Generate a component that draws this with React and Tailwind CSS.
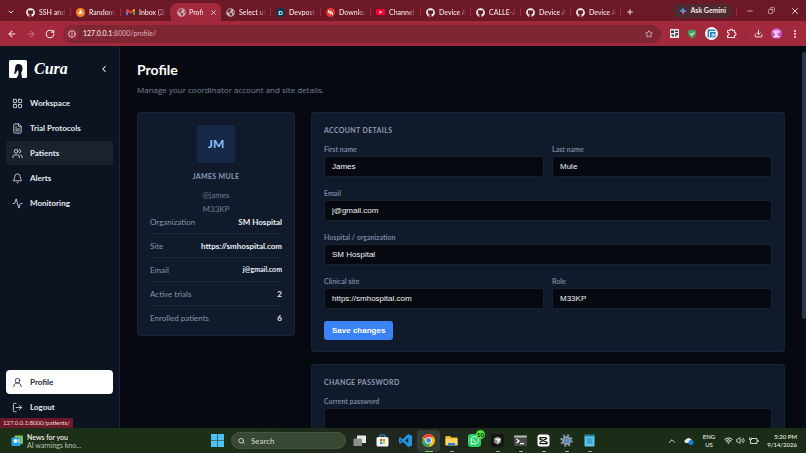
import React from 'react';
import {
  Activity,
  ArrowLeft,
  ArrowRight,
  Bell,
  ChevronDown,
  ChevronLeft,
  ChevronUp,
  Copy,
  Download,
  EllipsisVertical,
  FileText,
  Info,
  LayoutGrid,
  LogOut,
  Minus,
  Plus,
  RotateCw,
  Search,
  Star,
  UserRound,
  Users,
  Volume2,
  Wifi,
  X,
} from 'lucide-react';
import { FaGithub, FaGlobeAmericas } from 'react-icons/fa';

const Globe = () => <FaGlobeAmericas className="size-[9px] text-[#c3a9ae]" />;
const Github = () => <FaGithub className="size-[9px] text-white" />;

const Avast = () => (
  <svg viewBox="0 0 18 18" className="size-[9px]">
    <circle cx="9" cy="9" r="9" fill="#f58220" />
    <path d="M9 3 L14 13 Q9 9 4 13 Z" fill="#fff" />
  </svg>
);

const Gmail = () => (
  <svg viewBox="0 0 20 15" className="w-[9px]">
    <path d="M0 2 V15 H4.5 V6 Z" fill="#4285f4" />
    <path d="M20 2 V15 H15.5 V6 Z" fill="#34a853" />
    <path d="M0 2 Q2 -1 4.5 1 L10 5.5 L15.5 1 V6.5 L10 10.5 L4.5 6.5 L0 3.5 Z" fill="#ea4335" />
    <path d="M15.5 1 Q18 -1 20 2 V3.5 L15.5 6.5 Z" fill="#fbbc04" />
  </svg>
);

const Devpost = () => (
  <span className="flex size-[9px] items-center justify-center rounded-full bg-[#003e54] text-[6px] font-bold text-white">
    D
  </span>
);

const Downloads = () => (
  <svg viewBox="0 0 18 18" className="size-[9px]">
    <circle cx="9" cy="9" r="9" fill="#e8372c" />
    <path d="M5 4 V8 Q5 10 8 10 H10 V13 M13 14 V10 Q13 8 10 8 H8 V5" stroke="#fff" strokeWidth="2" fill="none" />
  </svg>
);

const Youtube = () => (
  <svg viewBox="0 0 18 13" className="w-[9px]">
    <rect width="18" height="13" rx="3.5" fill="#ff0033" />
    <path d="M7 3.5 L12.5 6.5 L7 9.5 Z" fill="#fff" />
  </svg>
);

const tabs = [
  { title: 'SSH and', icon: Github },
  { title: 'Random', icon: Avast },
  { title: 'Inbox (3)', icon: Gmail },
  { title: 'Profi', icon: Globe, active: true },
  { title: 'Select us', icon: Globe },
  { title: 'Devpost', icon: Devpost },
  { title: 'Downloa', icon: Downloads },
  { title: 'Channel', icon: Youtube },
  { title: 'Device A', icon: Github },
  { title: 'CALLE-A', icon: Github },
  { title: 'Device A', icon: Github },
  { title: 'Device A', icon: Github },
];

const Tab = ({ title, icon: Icon, active }) => (
  <div
    className={
      active
        ? 'flex h-[18px] w-[50px] items-center gap-[3px] rounded-t-md bg-[#a2283c] pr-1 pl-1.5'
        : 'flex h-[18px] w-[50px] items-center gap-1 pl-[5px]'
    }
  >
    <span className="flex w-[9px] shrink-0 justify-center">
      <Icon />
    </span>
    <span className="min-w-0 flex-1 mask-r-from-70% whitespace-nowrap">{title}</span>
    {active ? (
      <button aria-label="Close tab">
        <X className="size-[7px]" strokeWidth={3} />
      </button>
    ) : (
      <span className="h-2 w-px shrink-0 bg-[#a2283c]" />
    )}
  </div>
);

const Browser = () => (
  <header className="shrink-0 text-[7px] font-medium text-[#f6e6e8]">
    <div className="flex h-[21px] items-end bg-[#6c1827]">
      <button aria-label="Search tabs" className="flex h-[18px] w-[21px] items-center justify-center">
        <ChevronDown className="size-2" strokeWidth={3} />
      </button>
      {tabs.map((tab, i) => (
        <Tab key={i} {...tab} />
      ))}
      <button aria-label="New tab" className="flex h-[18px] w-[17px] items-center justify-center">
        <Plus className="size-2" strokeWidth={3} />
      </button>
      <div className="ml-auto flex h-[21px] items-center">
        <button className="flex h-[14px] items-center gap-[3px] rounded-md bg-[#4c2a2e] px-1.5 font-bold whitespace-nowrap">
          <svg viewBox="0 0 16 16" className="size-2">
            <path d="M8 0 Q9 7 16 8 Q9 9 8 16 Q7 9 0 8 Q7 7 8 0 Z" fill="#4c8df6" />
            <path d="M0 8 Q7 7 8 0 L8 8 Z" fill="#34a8c4" />
            <path d="M16 8 Q9 9 8 16 L8 8 Z" fill="#d96570" />
          </svg>
          Ask Gemini
        </button>
        <span className="ml-1 h-2 w-px bg-[#a2283c]" />
        <button aria-label="Minimize" className="flex w-[22px] justify-center pl-1">
          <Minus className="size-2" />
        </button>
        <button aria-label="Restore" className="flex w-6 justify-center">
          <Copy className="size-[7px] -scale-x-100" />
        </button>
        <button aria-label="Close" className="flex w-[23px] justify-center">
          <X className="size-2.5" />
        </button>
      </div>
    </div>

    <div className="flex h-[25px] items-center bg-[#a2283c] pr-1.5 pl-[7px]">
      <div className="flex w-[56px] items-center gap-[9px]">
        <button aria-label="Back">
          <ArrowLeft className="size-2.5" strokeWidth={2.5} />
        </button>
        <button aria-label="Forward">
          <ArrowRight className="size-2.5 text-[#c9707f]" strokeWidth={2.5} />
        </button>
        <button aria-label="Reload">
          <RotateCw className="size-2.5" strokeWidth={2.5} />
        </button>
      </div>
      <div className="flex h-[18px] flex-1 items-center rounded-full bg-[#7f2633] pr-2 pl-[2px]">
        <span className="mr-1 flex size-[14px] items-center justify-center rounded-full bg-[#92293a]">
          <Info className="size-2" strokeWidth={2.5} />
        </span>
        <span className="flex-1">
          127.0.0.1<span className="text-[#d5a9b0]">:8000/profile/</span>
        </span>
        <button aria-label="Bookmark">
          <Star className="size-2" />
        </button>
      </div>
      <div className="ml-[9px] flex items-center gap-2">
        <svg viewBox="0 0 18 18" className="size-[9px]">
          <rect width="18" height="18" fill="#e8e4e4" />
          <path d="M2 3 H8 V8 H2 Z M10 3 H16 V6 H10 Z M11 8 H16 V12 H13 V15 H10 Z M2 11 H8 V15 H5 Z" fill="#3b3f46" />
        </svg>
        <svg viewBox="0 0 18 18" className="size-[10px]">
          <path d="M9 1 L17 3 Q17 13 9 17 Q1 13 1 3 Z" fill="#43a05c" />
          <path d="M5.5 8 L8.5 11 L13 6" stroke="#c6ecd0" strokeWidth="2" fill="none" />
        </svg>
        <svg viewBox="0 0 26 26" className="size-[13px]">
          <circle cx="13" cy="13" r="13" fill="#fff" />
          <rect x="5" y="5" width="16" height="16" rx="2" fill="#1d7fb8" />
          <path d="M9 9 H21 M9 9 V21 M13 14 H18 V18 H13" stroke="#fff" strokeWidth="2" fill="none" />
        </svg>
        <svg viewBox="0 0 22 22" className="size-[11px]" fill="none" stroke="#f6e6e8" strokeWidth="2.2">
          <path d="M3 5 H8 Q8 2 10.5 2 Q13 2 13 5 H17 V9 Q20 9 20 12 Q20 15 17 15 V19 H3 V15 Q6 15 6 12 Q6 9 3 9 Z" />
        </svg>
        <span className="h-2 w-px bg-[#7f2633]" />
        <Download className="size-[9px]" strokeWidth={2.5} />
        <svg viewBox="0 0 22 22" className="size-[11px]">
          <circle cx="11" cy="11" r="11" fill="#c94fc4" />
          <path d="M2 8 Q11 -2 20 8 L11 12 Z" fill="#f2b6ea" />
          <path d="M4 17 H18 M9 8 V17 L14 12" stroke="#fde8fb" strokeWidth="2.5" fill="none" />
        </svg>
        <button aria-label="Menu">
          <EllipsisVertical className="size-[10px]" strokeWidth={3} />
        </button>
      </div>
    </div>
  </header>
);

const navItems = [
  { label: 'Workspace', icon: LayoutGrid },
  { label: 'Trial Protocols', icon: FileText },
  { label: 'Patients', icon: Users, hover: true },
  { label: 'Alerts', icon: Bell },
  { label: 'Monitoring', icon: Activity },
];

const NavLink = ({ label, icon: Icon, hover, active }) => {
  let look = 'text-[#e2e8f0]';
  if (hover) look = 'bg-[#1c222d] text-[#e2e8f0]';
  if (active) look = 'bg-white text-[#1e293b]';
  return (
    <a href="#" className={`flex h-6 items-center gap-[7px] rounded px-1.5 text-[8px] font-bold ${look}`}>
      <Icon className="size-[11px]" strokeWidth={1.8} />
      {label}
    </a>
  );
};

const Sidebar = () => (
  <aside className="flex w-[120px] shrink-0 flex-col border-r border-[#1a2436] bg-[#0d1421] px-1.5 pt-[13px] pb-[9px]">
    <div className="mb-[13px] flex h-[19px] items-center pr-1 pl-[3px]">
      <svg viewBox="0 0 36 36" className="size-[18px]">
        <rect width="36" height="36" rx="3" fill="#fff" />
        <path
          d="M12 18 Q12 8 19 8 Q27 8 27 17 Q27 22 24.5 25 L26 36 H15 Q20 31 19 25 Q19 20 16.500 21 L14 27 L10 27.500 Q12 23 12 18 Z"
          fill="#0d1421"
        />
      </svg>
      <span className="ml-[7px] font-['Liberation_Serif',serif] text-[16px] leading-[18px] font-bold text-white italic">
        Cura
      </span>
      <button aria-label="Collapse sidebar" className="ml-auto text-white">
        <ChevronLeft className="size-2.5" strokeWidth={2.5} />
      </button>
    </div>
    <nav className="flex flex-col gap-px">
      {navItems.map((item) => (
        <NavLink key={item.label} {...item} />
      ))}
    </nav>
    <div className="mt-auto flex flex-col gap-px">
      <NavLink label="Profile" icon={UserRound} active />
      <NavLink label="Logout" icon={LogOut} />
    </div>
  </aside>
);

const Card = ({ children }) => (
  <section className="rounded-[3px] border border-[#182335] bg-[#111a2a] px-3 pt-3 pb-[11px]">{children}</section>
);

const CardTitle = ({ children }) => (
  <h2 className="text-[7px] leading-[10px] font-bold tracking-wider text-[#8c9cb5] uppercase">{children}</h2>
);

const Field = ({ id, label, value = '', type = 'text' }) => (
  <div className="flex flex-1 flex-col">
    <label htmlFor={id} className="mb-0.5 text-[7px] leading-[10px] font-bold text-[#74849d]">
      {label}
    </label>
    <input
      id={id}
      type={type}
      defaultValue={value}
      className="h-[21px] w-full rounded-[3px] border border-[#172131] bg-[#060a10] px-[7px] font-['Liberation_Sans',sans-serif] text-[8px] text-[#eef2f7]"
    />
  </div>
);

const facts = [
  { name: 'Organization', value: 'SM Hospital' },
  { name: 'Site', value: 'https://smhospital.com' },
  { name: 'Email', value: 'j@gmail.com', small: true },
  { name: 'Active trials', value: '2' },
  { name: 'Enrolled patients', value: '6' },
];

const ProfileCard = () => (
  <Card>
    <div className="flex flex-col items-center">
      <div className="flex size-[38px] items-center justify-center rounded-[3px] bg-[#172846] text-[12px] font-bold text-[#8ec2fb]">
        JM
      </div>
      <div className="mt-2">
        <CardTitle>James Mule</CardTitle>
      </div>
      <p className="mt-[7px] text-[8px] leading-[14px] text-[#6f7f98]">@james</p>
      <p className="text-[8px] leading-[14px] text-[#6f7f98]">M33KP</p>
    </div>
    <dl className="text-[8px] leading-[12px]">
      {facts.map(({ name, value, small }) => (
        <div
          key={name}
          className="flex justify-between border-b border-[#1a2536] pt-1.5 pb-[5px] whitespace-nowrap first:pt-0 last:border-0 last:pb-0"
        >
          <dt className="text-[#8595ae]">{name}</dt>
          <dd
            className={
              small ? 'text-[7px] leading-[10px] font-bold text-[#e8eef6]' : 'font-bold text-[#e8eef6]'
            }
          >
            {value}
          </dd>
        </div>
      ))}
    </dl>
  </Card>
);

const Page = () => (
  <main className="min-w-0 flex-1 overflow-hidden bg-[#060a10] px-[17px] pt-4">
    <h1 className="text-[14px] leading-4 font-bold text-white">Profile</h1>
    <p className="mt-1.5 font-['Open_Sans',sans-serif] text-[8px] leading-3 text-[#74849d]">
      Manage your coordinator account and site details.
    </p>
    <div className="mt-4 grid grid-cols-[1fr_3fr] items-start gap-4">
      <ProfileCard />
      <div className="flex flex-col gap-3">
        <Card>
          <CardTitle>Account details</CardTitle>
          <form className="mt-[9px] flex flex-col gap-[11px]">
            <div className="flex gap-2">
              <Field id="first-name" label="First name" value="James" />
              <Field id="last-name" label="Last name" value="Mule" />
            </div>
            <Field id="email" label="Email" value="j@gmail.com" />
            <Field id="hospital" label="Hospital / organization" value="SM Hospital" />
            <div className="flex gap-2">
              <Field id="site" label="Clinical site" value="https://smhospital.com" />
              <Field id="role" label="Role" value="M33KP" />
            </div>
            <button
              type="button"
              className="mt-px h-[19px] self-start rounded-[3px] bg-[#3b82f6] px-2 font-['Liberation_Sans',sans-serif] text-[8px] font-bold text-white"
            >
              Save changes
            </button>
          </form>
        </Card>
        <Card>
          <CardTitle>Change password</CardTitle>
          <form className="mt-[9px] flex flex-col gap-[11px]">
            <Field id="current-password" label="Current password" type="password" />
          </form>
        </Card>
      </div>
    </div>
  </main>
);

const Windows = () => (
  <svg viewBox="0 0 24 24" className="size-[13px]">
    <path d="M0 0 H11.5 V11.5 H0 Z M12.5 0 H24 V11.5 H12.5 Z M0 12.5 H11.5 V24 H0 Z M12.5 12.5 H24 V24 H12.5 Z" fill="#4cc2f5" />
  </svg>
);

const TaskView = () => (
  <svg viewBox="0 0 26 26" className="size-[13px]">
    <rect x="8" y="3" width="18" height="15" rx="1" fill="#e9e9e9" />
    <rect x="1" y="9" width="17" height="15" rx="1" fill="#8d8d8d" />
  </svg>
);

const Store = () => (
  <svg viewBox="0 0 26 26" className="size-[13px]">
    <path d="M8 7 V2 H18 V7" stroke="#2ea3dd" strokeWidth="2" fill="none" />
    <rect x="1" y="6" width="24" height="19" rx="3" fill="#f4f4f4" />
    <path d="M8 10 H12.5 V14.5 H8 Z" fill="#f25022" />
    <path d="M13.5 10 H18 V14.5 H13.5 Z" fill="#7fba00" />
    <path d="M8 15.5 H12.5 V20 H8 Z" fill="#00a4ef" />
    <path d="M13.5 15.5 H18 V20 H13.5 Z" fill="#ffb900" />
  </svg>
);

const Vscode = () => (
  <svg viewBox="0 0 24 24" className="size-[13px]">
    <path d="M17 0 L24 3 V21 L17 24 L7 14.5 L2.5 18 L0 16.5 V7.5 L2.5 6 L7 9.5 Z M17 7 L11 12 L17 17 Z M2.5 9.5 V14.5 L5 12 Z" fill="#2196e3" fillRule="evenodd" />
  </svg>
);

const Chrome = () => (
  <svg viewBox="0 0 24 24" className="size-[13px]">
    <circle cx="12" cy="12" r="12" fill="#fbc116" />
    <path d="M12 12 L1.6 6 A12 12 0 0 1 22.4 6 H12 Z" fill="#ea4335" />
    <path d="M1.6 6 A12 12 0 0 0 12 24 L17 15 L12 12 L6.8 15 Z" fill="#34a853" />
    <circle cx="12" cy="12" r="6" fill="#fff" />
    <circle cx="12" cy="12" r="4.6" fill="#4285f4" />
  </svg>
);

const Folder = () => (
  <svg viewBox="0 0 26 26" className="size-[13px]">
    <path d="M1 4 H10 L13 7 H25 V22 H1 Z" fill="#f3b22b" />
    <path d="M1 9 H25 V23 H1 Z" fill="#fdd663" />
    <path d="M6 18 H20 V23 H6 Z" fill="#2b86d9" />
  </svg>
);

const Whatsapp = () => (
  <span className="relative">
    <svg viewBox="0 0 26 26" className="size-[13px]">
      <rect width="26" height="26" rx="6" fill="#25d366" />
      <path d="M6 20 L7 16 A7.5 7.5 0 1 1 10 19 Z" stroke="#fff" strokeWidth="2" fill="none" />
      <path d="M10 10 Q11 15 16 16" stroke="#fff" strokeWidth="2.5" fill="none" />
    </svg>
    <span className="absolute -top-1 -right-1 flex size-[9px] items-center justify-center rounded-full bg-[#4ade3c] text-[6px] font-semibold text-black">
      10
    </span>
  </span>
);

const Cursor = () => (
  <svg viewBox="0 0 26 26" className="size-[13px]">
    <rect width="26" height="26" rx="6" fill="#141414" />
    <path d="M13 5 L20 9 V17 L13 21 L6 17 V9 Z" fill="#8b8b8b" />
    <path d="M6 9 L20 9 L13 21 V13 Z" fill="#f1f1f1" />
  </svg>
);

const Terminal = () => (
  <svg viewBox="0 0 26 26" className="size-[13px]">
    <rect y="3" width="26" height="21" rx="2" fill="#4a4a4a" />
    <rect y="3" width="26" height="4" rx="2" fill="#b5b5b5" />
    <path d="M5 10 L10 14 L5 18 M12 19 H20" stroke="#fff" strokeWidth="2.5" fill="none" />
  </svg>
);

const Capcut = () => (
  <svg viewBox="0 0 26 26" className="size-[13px]">
    <rect x="1" y="1" width="24" height="24" rx="5" fill="#fff" />
    <path d="M18 9 V7 H6 V10 L20 17 V19 H6 V17 M6 16 L20 9" stroke="#111" strokeWidth="2.5" fill="none" />
  </svg>
);

const Gear = () => (
  <svg viewBox="0 0 26 26" className="size-[13px]">
    <circle cx="13" cy="13" r="10.5" fill="none" stroke="#8796a5" strokeWidth="4" strokeDasharray="4.4 3.85" />
    <circle cx="13" cy="13" r="7" fill="#5d7188" stroke="#9dacba" strokeWidth="3" />
    <circle cx="13" cy="13" r="3.5" fill="#3f9be8" />
  </svg>
);

const Notepad = () => (
  <svg viewBox="0 0 26 26" className="size-[13px]">
    <rect x="3" y="2" width="20" height="23" rx="2" fill="#5cc8ef" />
    <rect x="3" y="1" width="20" height="4" rx="1" fill="#2a7fa8" />
    <path d="M7 10 H19 M7 14 H19 M7 18 H19" stroke="#1b7ba6" strokeWidth="1.6" />
  </svg>
);

const apps = [
  { name: 'Task view', icon: TaskView },
  { name: 'Store', icon: Store },
  { name: 'VS Code', icon: Vscode },
  { name: 'Chrome', icon: Chrome, focused: true },
  { name: 'Files', icon: Folder, open: true },
  { name: 'WhatsApp', icon: Whatsapp },
  { name: 'Cursor', icon: Cursor, open: true },
  { name: 'Terminal', icon: Terminal, open: true },
  { name: 'CapCut', icon: Capcut, open: true },
  { name: 'Settings', icon: Gear, open: true },
  { name: 'Notepad', icon: Notepad, open: true },
];

const Taskbar = () => (
  <footer className="grid h-[25px] shrink-0 grid-cols-[1fr_auto_1fr] items-center bg-linear-to-r from-[#1c2f17] from-30% via-[#20261f] via-50% to-[#1b2c17] to-65% text-[7px] text-white">
    <div className="flex items-center gap-1 pl-[11px]">
      <svg viewBox="0 0 24 24" className="size-3">
        <rect x="7" y="1" width="17" height="17" rx="2" fill="#8bc34a" />
        <rect x="1" y="5" width="18" height="17" rx="2" fill="#25a3e8" />
        <circle cx="9" cy="12" r="4" fill="#e6f7ff" />
        <path d="M14 10 H18 M14 14 H18" stroke="#e6f7ff" strokeWidth="2" />
      </svg>
      <div className="leading-[8px]">
        <p className="font-medium">News for you</p>
        <p className="text-[#bcc6ba]">AI warnings kno...</p>
      </div>
    </div>

    <div className="flex items-center pl-1.5">
      <button aria-label="Start" className="mr-[7px]">
        <Windows />
      </button>
      <label className="mr-[2px] flex h-[17px] w-[115px] items-center gap-1.5 rounded-full border border-[#465541] bg-[#384933] px-1.5">
        <Search className="size-2" strokeWidth={2.5} />
        <input
          type="text"
          placeholder="Search"
          aria-label="Search"
          className="w-full min-w-0 text-[8px] placeholder:text-[#d3dbd0]"
        />
      </label>
      {apps.map(({ name, icon: Icon, open, focused }) => (
        <button
          key={name}
          aria-label={name}
          className={
            focused
              ? 'relative flex h-[22px] w-[23px] items-center justify-center rounded bg-white/10'
              : 'relative flex h-[22px] w-[23px] items-center justify-center'
          }
        >
          <Icon />
          {open && <span className="absolute bottom-0 h-px w-1 rounded-full bg-[#a8b0a6]" />}
          {focused && <span className="absolute bottom-0 h-px w-2 rounded-full bg-[#6fd35c]" />}
        </button>
      ))}
    </div>

    <div className="flex items-center justify-end pr-[9px]">
      <ChevronUp className="size-2.5" />
      <svg viewBox="0 0 20 16" className="ml-[7px] w-[10px]">
        <path d="M4 12 Q0 11 1 7 Q2 5 4 5 Q7 0 12 3 Q16 4 16 8 V12 Z" fill="#e5edf5" />
        <circle cx="14" cy="11" r="5" fill="#1683d8" />
      </svg>
      <div className="mx-[9px] text-center text-[6px] leading-[8px]">
        <p>ENG</p>
        <p>US</p>
      </div>
      <Wifi className="size-[9px]" strokeWidth={2.5} />
      <Volume2 className="ml-[3px] size-[9px]" />
      <svg viewBox="0 0 20 16" className="ml-1 w-[10px]" fill="none" stroke="#fff" strokeWidth="1.6">
        <path d="M6 3 H16 V13 H3 V7 M18.5 6 V10 M1 1 V5 H5 V1 M3 5 V8" />
      </svg>
      <div className="ml-2 text-right text-[6px] leading-[8px] whitespace-nowrap">
        <p>5:20 PM</p>
        <p>9/14/2026</p>
      </div>
    </div>
  </footer>
);

const App = () => {
  return (
    <div className="flex h-screen flex-col overflow-hidden bg-[#060a10] font-['Lato','Open_Sans',sans-serif]">
      <Browser />
      <div className="relative flex min-h-0 flex-1">
        <Sidebar />
        <Page />
        <div className="w-1 shrink-0 bg-[#080d15] pt-1.5">
          <div className="h-[71%] rounded-full bg-[#293550]" />
        </div>
        <div className="absolute bottom-0 left-0 bg-[#6c1827] px-[3px] text-[6px] leading-[10px] text-[#f0d9dc]">
          127.0.0.1:8000/patients/
        </div>
      </div>
      <Taskbar />
    </div>
  );
};

export default App;
